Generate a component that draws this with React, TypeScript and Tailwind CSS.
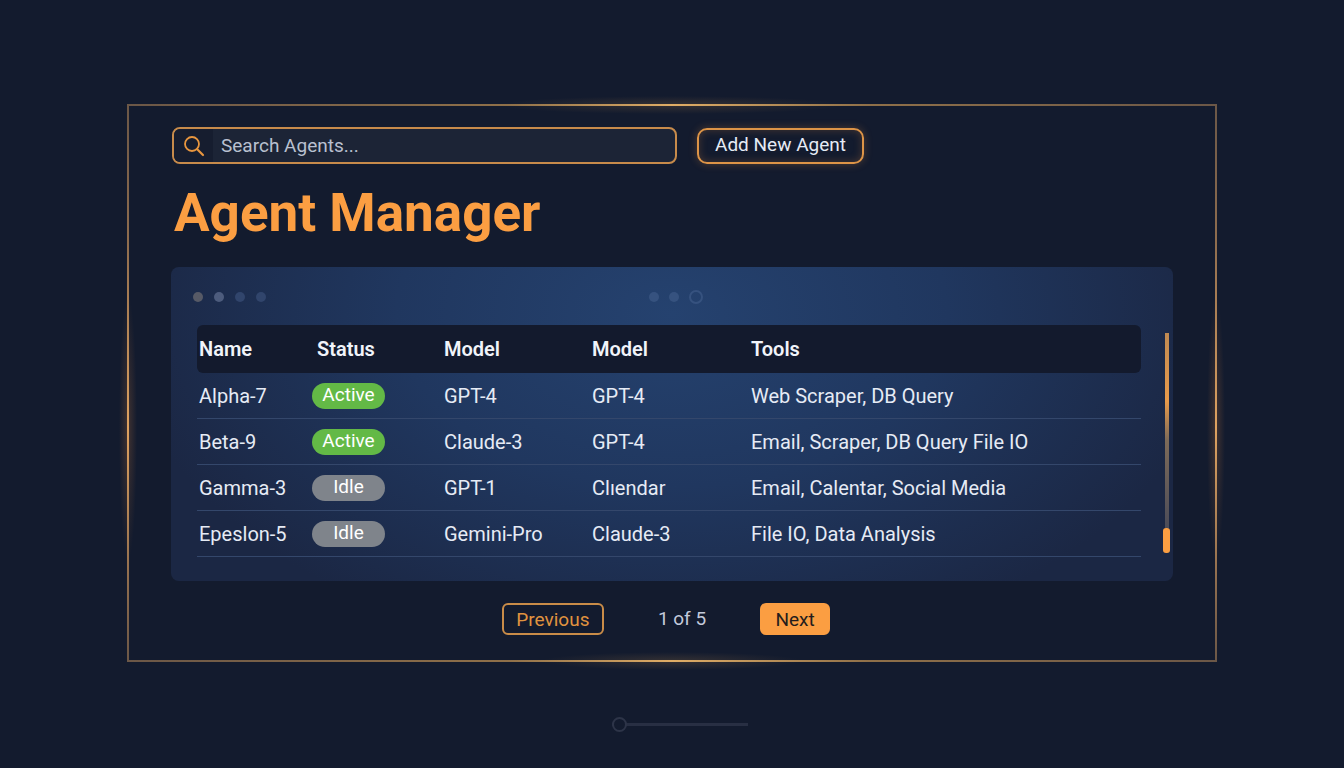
import { useState } from "react";

interface Agent {
  name: string;
  status: "Active" | "Idle";
  model: string;
  fallback: string;
  tools: string;
}

const agents: Agent[] = [
  { name: "Alpha-7", status: "Active", model: "GPT-4", fallback: "GPT-4", tools: "Web Scraper, DB Query" },
  { name: "Beta-9", status: "Active", model: "Claude-3", fallback: "GPT-4", tools: "Email, Scraper, DB Query File IO" },
  { name: "Gamma-3", status: "Idle", model: "GPT-1", fallback: "Clıendar", tools: "Email, Calentar, Social Media" },
  { name: "Epeslon-5", status: "Idle", model: "Gemini-Pro", fallback: "Claude-3", tools: "File IO, Data Analysis" },
];

function StatusPill({ status }: { status: Agent["status"] }) {
  return (
    <span
      className={`flex h-[26px] w-[73px] items-center justify-center rounded-full text-[19px] text-white ${
        status === "Active" ? "bg-[#63b946]" : "bg-[#7f848b]"
      }`}
    >
      {status}
    </span>
  );
}

// Thin gold lines that brighten toward the middle of each side
function FrameEdges() {
  return (
    <div aria-hidden="true" className="pointer-events-none absolute inset-0">
      <div className="absolute inset-x-[34%] -top-2 h-[18px] bg-[radial-gradient(closest-side,rgba(240,170,80,0.15),transparent)]" />
      <div className="absolute inset-x-[38%] -bottom-2 h-[18px] bg-[radial-gradient(closest-side,rgba(240,170,80,0.15),transparent)]" />
      <div className="absolute top-[34%] bottom-[18%] -left-2 w-[18px] bg-[radial-gradient(closest-side,rgba(240,140,60,0.2),transparent)]" />
      <div className="absolute top-[34%] -right-2 bottom-[18%] w-[18px] bg-[radial-gradient(closest-side,rgba(240,140,60,0.2),transparent)]" />
      <div className="absolute inset-x-0 top-0 h-[2px] bg-[linear-gradient(90deg,#6b5747,#8f7049_35%,#e0ad66_50%,#8f7049_68%,#6b5747)]" />
      <div className="absolute inset-x-0 bottom-0 h-[2px] bg-[linear-gradient(90deg,#6b5747,#8f7049_35%,#e0ad66_50%,#8f7049_68%,#6b5747)]" />
      <div className="absolute inset-y-0 left-0 w-[2px] bg-[linear-gradient(180deg,#6b5747,#8f6d4e_25%,#dfa260_58%,#8f6d4e_85%,#6b5747)]" />
      <div className="absolute inset-y-0 right-0 w-[2px] bg-[linear-gradient(180deg,#6b5747,#8f6d4e_25%,#dfa260_58%,#8f6d4e_85%,#6b5747)]" />
    </div>
  );
}

export default function App() {
  const [query, setQuery] = useState("");
  const [zoom, setZoom] = useState(0);

  return (
    <div className="flex min-h-screen flex-col bg-[#131b2e] px-[127px] pt-[104px] font-[Roboto,sans-serif] text-xl text-[#e6ebf5]">
      <main className="relative px-11 pt-[23px] pb-[27px]">
        <FrameEdges />

        <div className="flex items-center gap-5 pl-px text-[19px]">
          <label className="flex h-[37px] w-[505px] items-center overflow-hidden rounded-lg border-2 border-[#c78b4b] bg-[#1c2436]">
            <span className="flex h-full w-[39px] shrink-0 items-center justify-center bg-[#161d2f]">
              <svg width="22" height="22" viewBox="0 0 22 22" fill="none" stroke="#e8963f" strokeLinecap="round" aria-hidden="true">
                <circle cx="9" cy="9" r="7" strokeWidth="1.8" />
                <path d="M14.2 14.2L20 20" strokeWidth="2.2" />
              </svg>
            </span>
            <input
              type="text"
              aria-label="Search agents"
              placeholder="Search Agents..."
              value={query}
              onChange={(e) => setQuery(e.target.value)}
              className="h-full min-w-0 flex-1 bg-transparent px-2 outline-none placeholder:text-[#b9c0d0]"
            />
          </label>
          <button
            type="button"
            className="h-9 w-[167px] rounded-[10px] border-2 border-[#dd9447] whitespace-nowrap shadow-[0_0_8px_rgba(230,140,60,0.3),inset_0_0_8px_rgba(230,140,60,0.25)]"
          >
            Add New Agent
          </button>
        </div>

        <h1 className="mt-[19px] ml-[3px] text-[53px] leading-[60px] font-bold text-[#fb9e42]">Agent Manager</h1>

        <section className="mt-6 flex rounded-lg bg-[radial-gradient(ellipse_55%_110%_at_50%_15%,#25426f,#20375f_50%,#1b2744)] pt-6 pb-6 pl-[26px]">
          <div className="min-w-0 flex-1">
            <div aria-hidden="true" className="mb-[22px] flex h-3 items-center">
              <div className="-ml-1 flex w-[456px] gap-[11px]">
                <span className="size-[10px] rounded-full bg-[#575a66]" />
                <span className="size-[10px] rounded-full bg-[#4d5c7d]" />
                <span className="size-[10px] rounded-full bg-[#31456c]" />
                <span className="size-[10px] rounded-full bg-[#31456c]" />
              </div>
              <div className="flex items-center gap-[10px]">
                <span className="size-[10px] rounded-full bg-[#36527f]" />
                <span className="size-[10px] rounded-full bg-[#36527f]" />
                <span className="size-[14px] rounded-full border-2 border-[#36527f]" />
              </div>
            </div>

            <table className="w-full table-fixed border-separate border-spacing-0 text-left">
              <thead>
                <tr className="h-12 text-[#f1f4fa]">
                  <th className="w-[113px] rounded-l-md bg-[#131a2d] pl-[2px] font-semibold">Name</th>
                  <th className="w-[132px] bg-[#131a2d] pl-[7px] font-semibold">Status</th>
                  <th className="w-[148px] bg-[#131a2d] pl-[2px] font-semibold">Model</th>
                  <th className="w-[159px] bg-[#131a2d] pl-[2px] font-semibold">Model</th>
                  <th className="rounded-r-md bg-[#131a2d] pl-[2px] font-semibold">Tools</th>
                </tr>
              </thead>
              <tbody>
                {agents.map((a) => (
                  <tr key={a.name} className="h-[46px] *:border-b *:border-[#34476b] *:pl-[2px]">
                    <td>{a.name}</td>
                    <td>
                      <StatusPill status={a.status} />
                    </td>
                    <td>{a.model}</td>
                    <td>{a.fallback}</td>
                    <td>{a.tools}</td>
                  </tr>
                ))}
              </tbody>
            </table>
          </div>

          {/* Scroll track */}
          <div aria-hidden="true" className="mt-[42px] flex w-8 shrink-0 flex-col items-center pl-[19px]">
            <div className="h-[195px] w-1 bg-[linear-gradient(180deg,#c08a52,#e89a4a_35%,#7d6a58_55%,#4c4c58)]" />
            <div className="h-[25px] w-[7px] rounded-[3px] bg-[#fb9e42]" />
          </div>
        </section>

        <nav aria-label="Pagination" className="mt-[22px] flex items-center justify-center gap-[54px] pr-3 text-[19px]">
          <button type="button" className="h-8 w-[102px] rounded-md border-2 border-[#c98c48] leading-none text-[#e0933f]">
            Previous
          </button>
          <span className="text-[#c3cadb]">1 of 5</span>
          <button type="button" className="h-8 w-[70px] rounded-md bg-[#fb9e42] leading-none text-[#241c1c]">
            Next
          </button>
        </nav>
      </main>

      <div className="mt-[54px] flex justify-center pl-4">
        <input
          type="range"
          aria-label="Zoom"
          min={0}
          max={100}
          value={zoom}
          onChange={(e) => setZoom(Number(e.target.value))}
          className="h-4 w-[136px] appearance-none bg-transparent [&::-webkit-slider-runnable-track]:h-[3px] [&::-webkit-slider-runnable-track]:bg-[#282f43] [&::-webkit-slider-thumb]:-mt-[6px] [&::-webkit-slider-thumb]:size-[15px] [&::-webkit-slider-thumb]:appearance-none [&::-webkit-slider-thumb]:rounded-full [&::-webkit-slider-thumb]:border-2 [&::-webkit-slider-thumb]:border-[#2d3448] [&::-webkit-slider-thumb]:bg-[#131b2e]"
        />
      </div>
    </div>
  );
}
